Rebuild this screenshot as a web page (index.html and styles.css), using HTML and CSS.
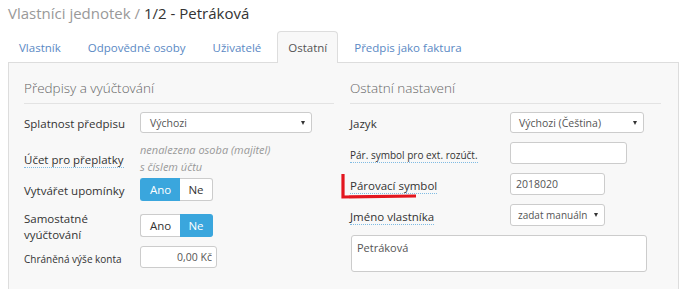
FILE: index.html
```html
<!DOCTYPE html>
<html lang="cs">

<head>
    <meta charset="UTF-8" />
    <meta name="viewport" content="width=device-width, initial-scale=1.0" />
    <title>Vlastníci jednotek - Petráková</title>
    <link rel="stylesheet" href="styles.css">
</head>

<body>
    <h1 class="page-title"><span class="crumb">Vlastníci jednotek /</span> 1/2 - Petráková</h1>

    <ul class="tabs">
        <li><a href="#">Vlastník</a></li>
        <li><a href="#">Odpovědné osoby</a></li>
        <li><a href="#">Uživatelé</a></li>
        <li class="active"><a href="#">Ostatní</a></li>
        <li><a href="#">Předpis jako faktura</a></li>
    </ul>

    <div class="tab-panel">
        <section class="col col-left">
            <h3 class="col-title">Předpisy a vyúčtování</h3>

            <div class="row row-1">
                <label class="lbl">Splatnost předpisu</label>
                <div class="select sel-splatnost"><span class="val">Výchozi</span><span class="caret"></span></div>
            </div>

            <div class="row row-2">
                <label class="lbl"><span class="hint">Účet pro přeplatky</span></label>
                <div class="note">nenalezena osoba (majitel)<br>s číslem účtu</div>
            </div>

            <div class="row row-3">
                <label class="lbl">Vytvářet upomínky</label>
                <div class="btn-group">
                    <button class="btn btn-ano on">Ano</button>
                    <button class="btn btn-ne">Ne</button>
                </div>
            </div>

            <div class="row row-4">
                <label class="lbl">Samostatné<br>vyúčtování</label>
                <div class="btn-group">
                    <button class="btn btn-ano">Ano</button>
                    <button class="btn btn-ne on">Ne</button>
                </div>
            </div>

            <div class="row row-5">
                <label class="lbl lbl-small">Chráněná výše konta</label>
                <input type="text" class="input inp-konto" value="0,00 Kč">
            </div>
        </section>

        <section class="col col-right">
            <h3 class="col-title">Ostatní nastavení</h3>

            <div class="row row-1">
                <label class="lbl">Jazyk</label>
                <div class="select sel-jazyk"><span class="val">Výchozi (Čeština)</span><span class="caret"></span></div>
            </div>

            <div class="row r-gap">
                <label class="lbl lbl-small"><span class="hint">Pár. symbol pro ext. rozúčt.</span></label>
                <input type="text" class="input inp-ext" value="">
            </div>

            <div class="row r-gap marked">
                <label class="lbl"><span class="hint">Párovací symbol</span></label>
                <input type="text" class="input inp-symbol" value="2018020">
                <!-- červené zvýraznění -->
                <svg class="mark" width="80" height="30" viewBox="0 0 80 30">
                    <path d="M3 1 L3 24 L76 23" fill="none" stroke="#e3161f" stroke-width="3.2" />
                </svg>
            </div>

            <div class="row r-gap">
                <label class="lbl"><span class="hint">Jméno vlastníka</span></label>
                <div class="select sel-jmeno"><span class="val">zadat manuáln</span><span class="caret"></span></div>
            </div>

            <textarea class="textarea">Petráková</textarea>
        </section>
    </div>
</body>

</html>
```

FILE: styles.css
```css
body {
    font-family: 'Open Sans', 'DejaVu Sans', sans-serif;
    margin: 0;
    padding: 0 8px;
    color: #333;
    background: #ffffff;
}

.page-title {
    margin: 0;
    padding-top: 2px;
    font-size: 15px;
    line-height: 22px;
    font-weight: normal;
    color: #333;
}

.crumb {
    color: #999;
}

/* záložky */
.tabs {
    display: flex;
    list-style: none;
    margin: 7px 0 0;
    padding: 0;
    border-bottom: 1px solid #ddd;
}

.tabs li {
    margin-right: 5px;
    margin-bottom: -1px;
}

.tabs a {
    display: block;
    height: 31px;
    line-height: 31px;
    padding: 0 10px;
    font-size: 11.5px;
    color: #5a89c4;
    text-decoration: none;
    border: 1px solid transparent;
    border-bottom: none;
    border-radius: 4px 4px 0 0;
}

.tabs .active a {
    color: #555;
    background: #f8f8f8;
    border-color: #ddd;
}

.tab-panel {
    display: grid;
    grid-template-columns: 310px 311px;
    column-gap: 16px;
    background: #f8f8f8;
    border: 1px solid #ddd;
    border-top: none;
    padding: 0 15px 30px;
}

.col-title {
    margin: 0;
    padding-top: 14px;
    padding-bottom: 4px;
    font-size: 13.5px;
    line-height: 22px;
    font-weight: 300;
    color: #666;
    border-bottom: 1px solid #e3e3e3;
}

.row {
    display: flex;
    align-items: center;
}

.lbl {
    font-size: 11.5px;
    line-height: 16px;
    color: #333;
    padding-top: 3px;
}

.col-left .lbl {
    width: 116px;
}

.col-right .lbl {
    width: 160px;
}

.lbl-small {
    font-size: 10px;
}

.hint {
    border-bottom: 1px dotted #7fbbe3;
}

.row-1 {
    margin-top: 8px;
    height: 21px;
}

.row-2 {
    margin-top: 8px;
    height: 34px;
}

.row-3 {
    margin-top: 3px;
    height: 23px;
}

.row-4 {
    margin-top: 8px;
    height: 32px;
}

.row-5 {
    margin-top: 5px;
    height: 22px;
}

.r-gap {
    margin-top: 9px;
    height: 22px;
}

/* ovládací prvky */
.select {
    display: flex;
    align-items: center;
    box-sizing: border-box;
    height: 21px;
    padding: 0 6px 0 9px;
    background: #fff;
    border: 1px solid #ccc;
    border-radius: 3px;
    font-size: 10.5px;
    color: #555;
}

.select .val {
    white-space: nowrap;
    margin-right: 4px;
}

.caret {
    flex: none;
    margin-left: auto;
    width: 0;
    height: 0;
    border-left: 2.5px solid transparent;
    border-right: 2.5px solid transparent;
    border-top: 4px solid #333;
}

.sel-splatnost {
    width: 172px;
}

.sel-jazyk {
    width: 134px;
    padding-left: 8px;
}

.sel-jmeno {
    width: 95px;
    height: 22px;
    padding-left: 7px;
    font-size: 10px;
}

.note {
    font-size: 11px;
    font-style: italic;
    line-height: 17px;
    color: #999;
}

.btn-group {
    display: flex;
    height: 23px;
}

.btn {
    font-family: inherit;
    font-size: 11.5px;
    color: #333;
    background: #fff;
    border: 1px solid #ccc;
    padding: 0;
    height: 23px;
}

.btn-ano {
    width: 40px;
    border-radius: 3px 0 0 3px;
    border-right: none;
}

.btn-ne {
    width: 33px;
    border-radius: 0 3px 3px 0;
    border-left: none;
}

.btn.on {
    background: #3aa6dd;
    border-color: #3aa6dd;
    color: #fff;
}

.input {
    box-sizing: border-box;
    height: 22px;
    padding: 0 5px;
    font-family: inherit;
    font-size: 10.5px;
    color: #555;
    background: #fff;
    border: 1px solid #ccc;
    border-radius: 3px;
}

.inp-konto {
    width: 77px;
    text-align: right;
    padding-right: 4px;
}

.inp-ext {
    width: 117px;
}

.inp-symbol {
    width: 95px;
}

.marked {
    position: relative;
}

.mark {
    position: absolute;
    left: -10px;
    top: 0;
}

.textarea {
    display: block;
    box-sizing: border-box;
    width: 296px;
    height: 37px;
    margin: 9px 0 0 1px;
    padding: 4px 5px;
    font-family: inherit;
    font-size: 11px;
    color: #555;
    background: #fff;
    border: 1px solid #ccc;
    border-radius: 3px;
    resize: none;
}
```
